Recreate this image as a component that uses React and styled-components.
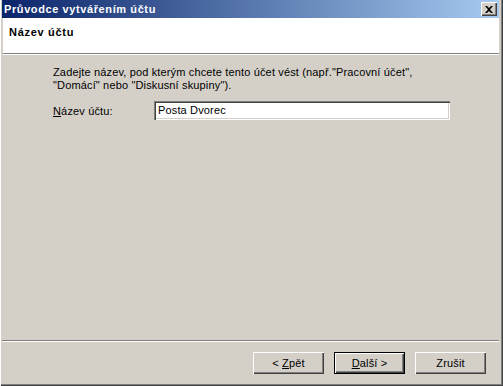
import React from "react";
import styled, { createGlobalStyle } from "styled-components";

const Global = createGlobalStyle`
  html, body { margin: 0; padding: 0; background: #d4d0c8; }
  body { font-family: Tahoma, "Liberation Sans", Arial, sans-serif; font-size: 11px; color: #000; letter-spacing: 0.15px; }
  * { box-sizing: border-box; }
`;

const Window = styled.div`
  width: 503px;
  height: 386px;
  display: flex;
  flex-direction: column;
  background: #d4d0c8;
  padding: 0 4px 4px 2px;
  box-shadow: inset 1px 0 0 #ffffff, inset -1px -1px 0 #404040, inset -2px -2px 0 #808080;
`;

const TitleBar = styled.div`
  height: 18px;
  flex: none;
  display: flex;
  align-items: center;
  justify-content: space-between;
  padding: 0 2px 0 2px;
  background: linear-gradient(to right, #0a246a, #a6caf0);
`;

const Title = styled.span`
  color: #fff;
  font-weight: bold;
  font-size: 11px;
  letter-spacing: 0.6px;
`;

const CloseBtn = styled.div`
  width: 16px;
  height: 14px;
  background: #d4d0c8;
  display: flex;
  align-items: center;
  justify-content: center;
  box-shadow: inset 1px 1px 0 #ffffff, inset -1px -1px 0 #404040, inset -2px -2px 0 #808080;
`;

const Header = styled.div`
  height: 36px;
  flex: none;
  background: #ffffff;
  padding: 8px 0 0 6px;
  margin-left: 1px;
  font-weight: bold;
  letter-spacing: 0.7px;
  border-bottom: 1px solid #808080;
  box-shadow: 0 1px 0 #ffffff;
`;

const Body = styled.div`
  flex: 1;
  display: flex;
  flex-direction: column;
  padding: 12px 0 0 51px;
  border-bottom: 1px solid #808080;
  box-shadow: 0 1px 0 #ffffff;
  margin-bottom: 1px;
`;

const Intro = styled.p`
  margin: 0;
  line-height: 13px;
  width: 400px;
`;

const FieldRow = styled.div`
  display: flex;
  align-items: center;
  margin-top: 9px;
`;

const Label = styled.label`
  width: 101px;
`;

const Input = styled.div`
  width: 296px;
  height: 19px;
  background: #fff;
  padding: 3px 0 0 4px;
  box-shadow: inset 1px 1px 0 #808080, inset 2px 2px 0 #404040, inset -1px -1px 0 #ffffff, inset -2px -2px 0 #d4d0c8;
`;

const Footer = styled.div`
  height: 40px;
  flex: none;
  display: flex;
  justify-content: flex-end;
  align-items: flex-start;
  gap: 10px;
  padding: 10px 13px 0 0;
`;

const Button = styled.div`
  width: 71px;
  height: 22px;
  display: flex;
  align-items: center;
  justify-content: center;
  background: #d4d0c8;
  box-shadow: ${(p) =>
    p.$default
      ? "inset 0 0 0 1px #000, inset 1px 1px 0 1px #ffffff, inset -1px -1px 0 1px #404040, inset -2px -2px 0 1px #808080"
      : "inset 1px 1px 0 #ffffff, inset -1px -1px 0 #404040, inset -2px -2px 0 #808080"};
`;

const U = styled.span`
  text-decoration: underline;
`;

export default function App() {
  return (
    <>
      <Global />
      <Window>
        <TitleBar>
          <Title>Průvodce vytvářením účtu</Title>
          <CloseBtn>
            <svg width="8" height="7" viewBox="0 0 8 7">
              <path d="M0 0h2l2 2 2-2h2L5 3.5 8 7H6L4 5 2 7H0l3-3.5z" fill="#000" />
            </svg>
          </CloseBtn>
        </TitleBar>
        <Header>Název účtu</Header>
        <Body>
          <Intro>
            Zadejte název, pod kterým chcete tento účet vést (např."Pracovní účet",
            <br />
            "Domácí" nebo "Diskusní skupiny").
          </Intro>
          <FieldRow>
            <Label><U>N</U>ázev účtu:</Label>
            <Input>Posta Dvorec</Input>
          </FieldRow>
        </Body>
        <Footer>
          <Button><span>&lt; <U>Z</U>pět</span></Button>
          <Button $default><span><U>D</U>alší &gt;</span></Button>
          <Button><span>Zrušit</span></Button>
        </Footer>
      </Window>
    </>
  );
}
